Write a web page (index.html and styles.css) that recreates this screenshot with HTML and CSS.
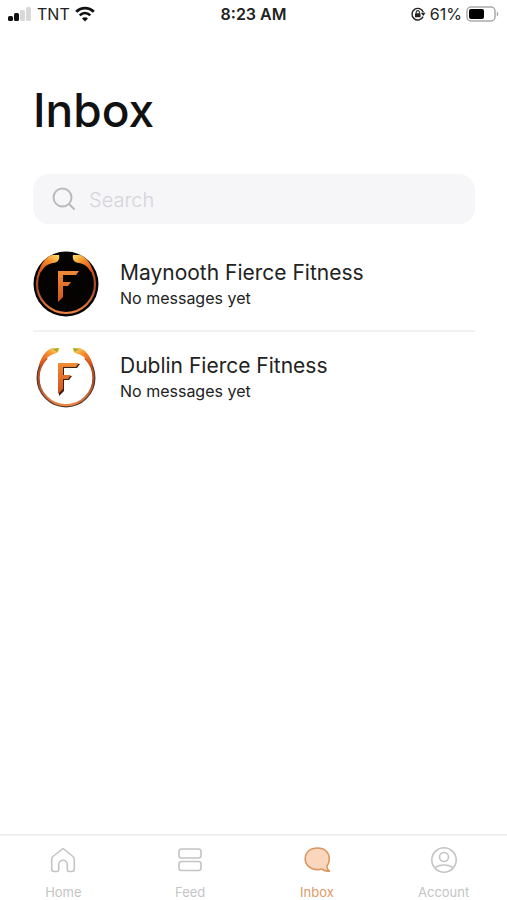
FILE: index.html
```html
<!DOCTYPE html>
<html lang="en">
<head>
    <meta charset="UTF-8">
    <meta name="viewport" content="width=device-width, initial-scale=1.0">
    <title>Inbox</title>
    <link rel="stylesheet" href="styles.css">
</head>
<body>
    <header class="status-bar">
        <div class="status-left">
            <svg class="signal" width="24" height="16" viewBox="0 0 24 16" aria-hidden="true">
                <rect x="0" y="10" width="5" height="5" rx="1.5" fill="#111"/>
                <rect x="6" y="7" width="5" height="8" rx="1.5" fill="#111"/>
                <rect x="12" y="4" width="5" height="11" rx="1.5" fill="#d8d8d8"/>
                <rect x="18" y="1" width="5" height="14" rx="1.5" fill="#d8d8d8"/>
            </svg>
            <span>TNT</span>
            <svg class="wifi" width="20" height="16" viewBox="0 0 20 16" aria-hidden="true">
                <path d="M1.2 5.8 C6.2 .8 13.8 .8 18.8 5.8" fill="none" stroke="#111" stroke-width="2.8"/>
                <path d="M4.7 9.4 C7.8 6.4 12.2 6.4 15.3 9.4" fill="none" stroke="#111" stroke-width="2.6"/>
                <path d="M10 15.4 L7 12.4 C8.7 10.8 11.3 10.8 13 12.4Z" fill="#111"/>
            </svg>
        </div>
        <time class="status-time">8:23 AM</time>
        <div class="status-right">
            <svg width="16" height="16" viewBox="0 0 16 16" aria-hidden="true">
                <path d="M13.1 10.6 A5.8 5.8 0 1 1 13.3 6.3" fill="none" stroke="#222" stroke-width="1.4"/>
                <path d="M10.8 6.8 H15.6 L13.3 10Z" fill="#222"/>
                <rect x="5" y="7.3" width="5.6" height="4" rx=".6" fill="#222"/>
                <path d="M6.2 7.5 V6.2 A1.6 1.6 0 0 1 9.4 6.2 V7.5" fill="none" stroke="#222" stroke-width="1.1"/>
            </svg>
            <span>61%</span>
            <svg width="33" height="16" viewBox="0 0 33 16" aria-hidden="true">
                <rect x="1" y="1" width="28" height="14" rx="4" fill="#fff" stroke="#aaa" stroke-width="1.5"/>
                <rect x="3" y="3" width="15" height="10" rx="2" fill="#000"/>
                <path d="M30.8 5.5 C32.8 6.3 32.8 9.7 30.8 10.5Z" fill="#aaa"/>
            </svg>
        </div>
    </header>

    <main class="content">
        <h1>Inbox</h1>

        <label class="search">
            <svg width="24" height="24" viewBox="0 0 24 24" fill="none" stroke="#b9b9bc" stroke-width="2" stroke-linecap="round" aria-hidden="true">
                <circle cx="10.5" cy="10.5" r="9"/>
                <path d="M17 17 L22 22"/>
            </svg>
            <input type="search" placeholder="Search" aria-label="Search">
        </label>

        <ul class="threads">
            <li class="thread">
                <svg class="avatar" viewBox="0 0 66 66" aria-hidden="true">
                    <defs>
                        <linearGradient id="ring" x1="0" y1="0" x2="0" y2="1">
                            <stop offset="0" stop-color="#d9571c"/>
                            <stop offset=".5" stop-color="#a5482a"/>
                            <stop offset="1" stop-color="#ee8440"/>
                        </linearGradient>
                        <linearGradient id="letter" x1="0" y1="0" x2="0" y2="1">
                            <stop offset="0" stop-color="#f08a35"/>
                            <stop offset="1" stop-color="#d2521d"/>
                        </linearGradient>
                        <linearGradient id="flame" x1="0" y1="1" x2="1" y2="0">
                            <stop offset="0" stop-color="#d9481a"/>
                            <stop offset=".55" stop-color="#f58a2b"/>
                            <stop offset="1" stop-color="#ffe36a"/>
                        </linearGradient>
                    </defs>
                    <circle cx="33" cy="33" r="32.5" fill="#050302"/>
                    <path d="M13 12 A29 29 0 1 0 53 12" fill="none" stroke="url(#ring)" stroke-width="2.2"/>
                    <path id="torch" d="M6 21 C8 12 13 6 19 4 L26 4 C27 8 25 12 20 12 C14 13 11 16 8 21Z" fill="url(#flame)"/>
                    <use href="#torch" transform="matrix(-1 0 0 1 66 0)"/>
                    <path d="M25 20 H46 L43 24 H30 V31 H38 L35 35 H30 V46 L25 51Z" fill="url(#letter)"/>
                </svg>
                <div class="thread-text">
                    <h2>Maynooth Fierce Fitness</h2>
                    <p>No messages yet</p>
                </div>
            </li>
            <li class="thread">
                <svg class="avatar" viewBox="0 0 66 66" aria-hidden="true">
                    <path d="M13 14 A28.2 28.2 0 1 0 53 14" fill="none" stroke="#5a3a2e" stroke-width="2.6"/>
                    <path d="M14 14 A27.4 27.4 0 1 0 52 14" fill="none" stroke="url(#ring)" stroke-width="2"/>
                    <path id="torch-light" d="M6 21 C9 11 14 6 19 4 L26 4 C27 7 25 9 21 10 C15 12 11 16 8 21Z" fill="url(#flame)"/>
                    <path d="M20 5 L26 4 L24 8Z" fill="#97ad38"/>
                    <use href="#torch-light" transform="matrix(-1 0 0 1 66 0)"/>
                    <path d="M46 5 L40 4 L42 8Z" fill="#97ad38"/>
                    <path d="M26 20 H47 L44 24 H31 V32 H39 L36 36 H31 V47 L26 52Z" fill="#35201a"/>
                    <path d="M25 19 H46 L43 23 H30 V31 H38 L35 35 H30 V45 L25 50Z" fill="url(#letter)"/>
                </svg>
                <div class="thread-text">
                    <h2>Dublin Fierce Fitness</h2>
                    <p>No messages yet</p>
                </div>
            </li>
        </ul>
    </main>

    <nav class="tab-bar">
        <a href="#home">
            <svg width="28" height="28" viewBox="0 0 28 28" aria-hidden="true">
                <path d="M14 2.5 L24 10.5 Q25.3 11.6 25.3 13.2 V23 Q25.3 25.5 22.8 25.5 H20.3 Q18.3 25.5 18.3 23.5 V18.5 A4.3 4.3 0 0 0 9.7 18.5 V23.5 Q9.7 25.5 7.7 25.5 H5.2 Q2.7 25.5 2.7 23 V13.2 Q2.7 11.6 4 10.5Z"/>
            </svg>
            <span>Home</span>
        </a>
        <a href="#feed">
            <svg width="28" height="28" viewBox="0 0 28 28" aria-hidden="true">
                <rect x="3" y="3" width="22" height="9" rx="2.5"/>
                <rect x="3" y="15.5" width="22" height="9" rx="2.5"/>
            </svg>
            <span>Feed</span>
        </a>
        <a class="active" href="#inbox" aria-current="page">
            <svg width="28" height="28" viewBox="0 0 28 28" aria-hidden="true">
                <path d="M14.5 2 C21.8 2 26.3 6.5 26.3 12.7 C26.3 16 25.2 18.5 23.8 20.3 Q24.2 23.3 26.4 25.2 Q22 25.6 18.6 23 Q16.8 23.6 14.5 23.6 C7 23.6 2.2 18.8 2.2 12.7 C2.2 6.5 7 2 14.5 2Z"/>
            </svg>
            <span>Inbox</span>
        </a>
        <a href="#account">
            <svg width="28" height="28" viewBox="0 0 28 28" aria-hidden="true">
                <circle cx="14" cy="14" r="12.2"/>
                <circle cx="14" cy="11" r="4.5"/>
                <path d="M5 22 C9.5 18 18.5 18 23 22"/>
            </svg>
            <span>Account</span>
        </a>
    </nav>
</body>
</html>
```
FILE: styles.css
```css
* {
    box-sizing: border-box;
}
body {
    font-family: Inter, "Liberation Sans", sans-serif;
    background-color: #fff;
    color: #222;
    margin: 0;
    min-height: 100vh;
    display: flex;
    flex-direction: column;
}
.status-bar {
    display: grid;
    grid-template-columns: 1fr auto 1fr;
    align-items: center;
    height: 28px;
    padding: 0 8px;
    font-size: 16px;
    line-height: 20px;
}
.status-left,
.status-right {
    display: flex;
    align-items: center;
    gap: 5px;
}
.status-right {
    justify-content: flex-end;
    gap: 4px;
}
.status-time {
    font-weight: 600;
}
.content {
    flex: 1;
    padding: 54px 32px 0 33px;
}
h1 {
    font-size: 46px;
    font-weight: 500;
    line-height: 56px;
    color: #111;
    margin: 0 0 36px;
}
.search {
    display: flex;
    align-items: center;
    gap: 13px;
    height: 50px;
    padding: 0 19px;
    border-radius: 16px;
    background: #f6f6f9;
}
.search input {
    flex: 1;
    min-width: 0;
    border: 0;
    outline: 0;
    padding: 2px 0 0;
    background: none;
    font: inherit;
    font-size: 20px;
    font-weight: 300;
}
.search input::placeholder {
    color: #d4d4d8;
}
.threads {
    list-style: none;
    margin: 14px 0 0;
    padding: 0;
}
.thread {
    display: flex;
    align-items: center;
    gap: 21px;
    height: 92px;
}
.thread + .thread {
    border-top: 2px solid #f2f2f3;
}
.avatar {
    width: 66px;
    height: 66px;
    flex: none;
}
.thread h2 {
    font-size: 21px;
    font-weight: 400;
    line-height: 28px;
    margin: 0;
}
.thread p {
    font-size: 16px;
    line-height: 22px;
    margin: 0;
}
.tab-bar {
    display: grid;
    grid-template-columns: repeat(4, 1fr);
    border-top: 2px solid #efefef;
    padding: 10px 0 0;
    height: 66px;
}
.tab-bar a {
    display: flex;
    flex-direction: column;
    align-items: center;
    gap: 10px;
    font-size: 13px;
    line-height: 16px;
    color: #c4c4c4;
    text-decoration: none;
}
.tab-bar svg {
    fill: none;
    stroke: #c4c4c4;
    stroke-width: 1.6;
    stroke-linejoin: round;
}
.tab-bar .active {
    color: #e09a64;
}
.tab-bar .active svg {
    fill: #fad6bd;
    stroke: #dc9660;
}
```
